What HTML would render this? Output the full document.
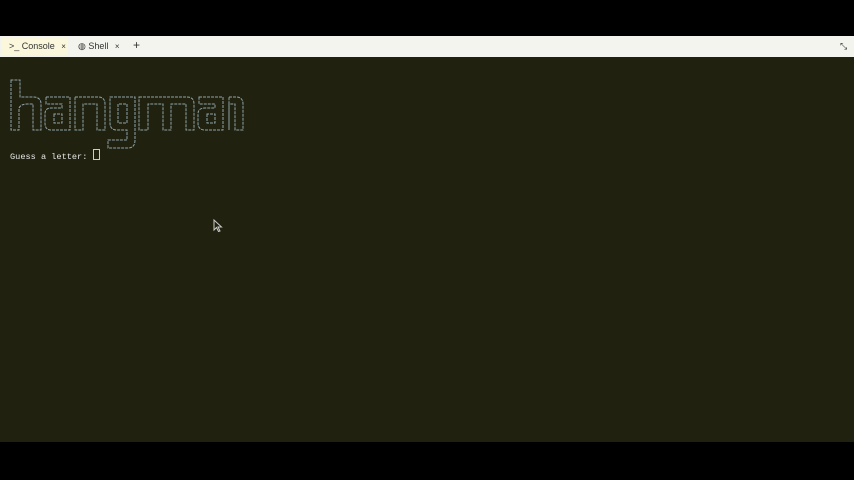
<!DOCTYPE html>
<html><head><style>
body{margin:0;width:854px;height:480px;background:#000;overflow:hidden;font-family:"Liberation Mono",monospace}
#bar{position:absolute;left:0;top:36px;width:854px;height:21px;background:#f4f4ee;font-family:"Liberation Sans",sans-serif;font-size:9px;color:#333}
#term{position:absolute;left:0;top:57px;width:854px;height:385px;background:#20220f}
.tab{position:absolute;top:5px}
</style></head><body>
<div id="bar">
<div style="position:absolute;left:2px;top:2px;width:66px;height:17px;background:#fbf7dc"></div>
<span class="tab" style="left:9px">&gt;_ Console <span style="font-size:8px;margin-left:4px">×</span></span>
<span class="tab" style="left:78px">◍ Shell <span style="font-size:8px;margin-left:4px">×</span></span>
<span class="tab" style="left:133px;font-size:12px;top:2px">+</span>
<span class="tab" style="left:840px;font-size:9px">⤡</span>
</div>
<div id="term">
<svg width="260" height="100" style="position:absolute;left:0;top:18px" fill="none" stroke="#8fa3a8" stroke-width="1" stroke-dasharray="3 1">
<g transform="translate(0,-75)">
<path d="M11 80V130H19V108Q21 104 27 104H33V130H41V104Q41 97 33 97H20V80Z"/>
<path d="M46 97H70V130H51Q45 130 45 123V114Q45 108 51 108H62V104H46ZM54 114V123H62V114Z"/>
<path d="M75 97H98Q105 97 105 104V130H97V104H83V130H75Z"/>
<path d="M110 97H135V140Q135 148 128 148H108V140H127V130H117Q110 130 110 123ZM118 104V123H127V104Z"/>
<path d="M139 97H187Q194 97 194 104V130H186V104H171V130H163V104H148V130H139Z"/>
<path d="M199 97H223V130H205Q198 130 198 123V114Q198 108 205 108H215V104H199ZM207 114V123H215V114Z"/>
<path d="M229 97H236Q243 97 243 104V130H235V104H229V130Z"/>
</g>
</svg>
<div style="position:absolute;left:10px;top:92px;font-size:8.6px;color:#e6e6e6">Guess a letter: <span style="display:inline-block;width:5px;height:9px;border:1px solid #ccc;vertical-align:-1px"></span></div>
<svg width="10" height="14" style="position:absolute;left:213px;top:162px"><path d="M1 1V11L3.5 8.5L5.5 12.5L7 12L5 8H8.5Z" fill="#20220f" stroke="#ccc" stroke-width="1"/></svg>
</div>
</body></html>
